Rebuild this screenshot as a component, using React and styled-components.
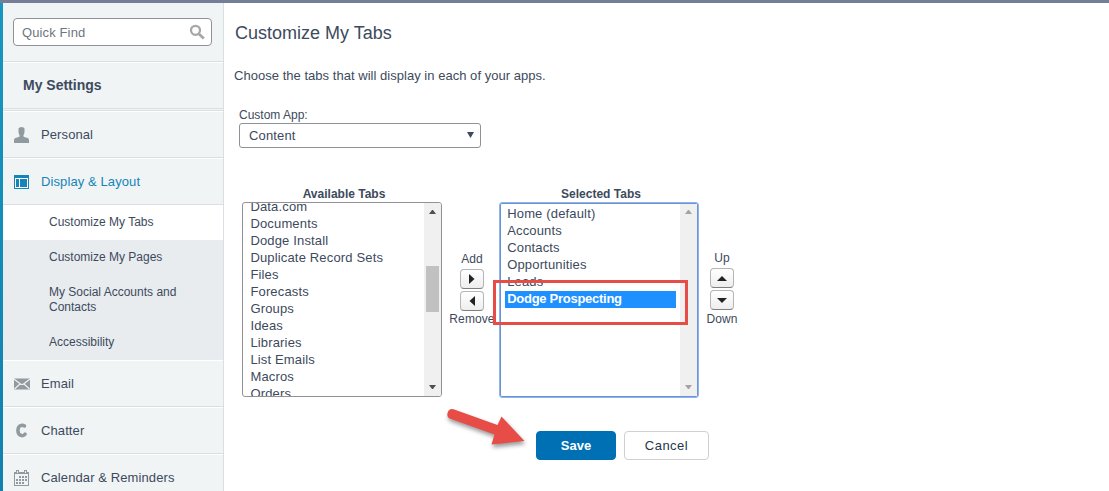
import React from 'react';
import styled, { createGlobalStyle, css } from 'styled-components';

const GlobalStyle = createGlobalStyle`
  *, *::before, *::after { box-sizing: border-box; }
  body { margin: 0; background: #fff; color: #3d4a5d; font: 13px/17px "Liberation Sans", Arial, sans-serif; overflow: hidden; }
`;

const Page = styled.div`
  display: flex;
  height: 491px;
  width: 1109px;
  border-top: 3px solid #747e96;
  position: relative;
  overflow: hidden;
`;
const Rail = styled.div`
  flex: none;
  width: 3px;
  margin-top: -3px;
  background: linear-gradient(#1797c0, #1280ae);
`;
const Sidebar = styled.aside`
  flex: none;
  width: 221px;
  background: #f0f4f5;
  border-right: 1px solid #d9dfe3;
`;
const SearchArea = styled.div`
  height: 59px;
  padding: 15px 11px 0 10px;
  border-bottom: 1px solid #d9dfe3;
`;
const SearchBox = styled.div`
  display: flex;
  align-items: center;
  justify-content: space-between;
  height: 28px;
  padding: 0 6px 0 8px;
  background: #fff;
  border: 1px solid #919297;
  border-radius: 4px;
  color: #6f757e;
  letter-spacing: 0.12px;
`;
const SideHeading = styled.h2`
  height: 47px;
  margin: 0 0 1px;
  padding-left: 20px;
  border-top: 1px solid #fff;
  border-bottom: 1px solid #d9dfe3;
  font-size: 14px;
  line-height: 45px;
`;
const HeadingRule = styled.div`
  height: 1px;
  background: #d9dfe3;
`;
const NavItem = styled.div`
  display: flex;
  align-items: center;
  height: 47px;
  padding-left: 11px;
  border-top: 1px solid #fff;
  border-bottom: 1px solid #d9dfe3;
  color: ${(p) => (p.$active ? '#1585b9' : '#3d4a5d')};
  letter-spacing: 0.1px;
  svg { width: 16px; height: 16px; margin-right: 11px; flex: none; }
`;
const SubItem = styled.div`
  padding: 10px 30px 10px 46px;
  font-size: 12px;
  line-height: 15px;
  background: ${(p) => (p.$current ? '#fff' : '#e8ecef')};
`;
const Main = styled.main`
  flex: 1;
  padding: 18px 0 0 11px;
`;
const Title = styled.h1`
  margin: 0;
  font-size: 18px;
  line-height: 24px;
  font-weight: 400;
`;
const Intro = styled.p`
  margin: 22px 0 24px -1px;
  font-size: 13px;
  line-height: 17px;
  letter-spacing: 0.03px;
`;
const FieldLabel = styled.div`
  padding-left: 4px;
  font-size: 12px;
  line-height: 15px;
`;
const Dropdown = styled.div`
  display: flex;
  align-items: center;
  justify-content: space-between;
  width: 242px;
  height: 25px;
  margin-left: 4px;
  padding: 0 6px 0 9px;
  border: 1px solid #919297;
  border-radius: 3px;
  letter-spacing: 0.15px;
`;
const Picker = styled.section`
  display: flex;
  align-items: flex-start;
  height: 211px;
  margin: 38px 0 0 7px;
`;
const ListHeading = styled.div`
  height: 16px;
  padding-left: 4px;
  font-size: 12px;
  font-weight: 700;
  line-height: 16px;
  text-align: center;
`;
const ListBox = styled.div`
  display: flex;
  justify-content: space-between;
  width: 200px;
  height: ${(p) => (p.$focused ? 196 : 195)}px;
  overflow: hidden;
  border: 1px solid #919297;
  border-radius: 3px;
  ${(p) => p.$focused && css`border-color: #8fb3ea; box-shadow: inset 0 0 0 1px #6a93d4;`}
`;
const Options = styled.div`
  flex: 1;
  margin-top: ${(p) => (p.$scrolled ? -5 : 2)}px;
  padding-left: ${(p) => (p.$scrolled ? 2 : 5)}px;
`;
const Option = styled.div`
  height: 17px;
  width: 171px;
  padding-left: ${(p) => (p.$pad ?? 5.4)}px;
  letter-spacing: 0.16px;
  white-space: nowrap;
  ${(p) => p.$selected && css`margin-top: 1px; background: #1e90ff; color: #fff; font-weight: 700; line-height: 16px; letter-spacing: -0.27px;`}
`;
const Scrollbar = styled.div`
  display: flex;
  flex-direction: column;
  justify-content: space-between;
  align-items: center;
  width: 17px;
  margin-right: ${(p) => (p.$inset ? 1 : 0)}px;
  margin-block: ${(p) => (p.$inset ? 1 : 0)}px;
  padding: ${(p) => (p.$inset ? '6px 0 7px' : '7px 0')};
  background: #f0f0f0;
  color: ${(p) => (p.$inset ? '#a3a3a3' : '#505050')};
`;
const Thumb = styled.div`
  width: 13px;
  height: 46px;
  background: #c1c1c1;
  margin-bottom: 21px;
`;
const Controls = styled.div`
  display: flex;
  flex-direction: column;
  align-items: center;
  width: ${(p) => p.$width}px;
  padding: ${(p) => p.$top}px 0 0 ${(p) => p.$indent || 0}px;
  font-size: 12px;
  line-height: 16px;
  letter-spacing: 0.1px;
`;
const ButtonPair = styled.div`
  display: flex;
  flex-direction: column;
  gap: 2px;
  margin: 2px 0 ${(p) => p.$below || 0}px;
`;
const ArrowButton = styled.button`
  display: flex;
  align-items: center;
  justify-content: center;
  width: 24px;
  height: 20px;
  padding: 0;
  border: 1px solid #b5b5b5;
  border-bottom-color: #7f7f7f;
  border-radius: 4px;
  background: linear-gradient(#fff, #eee);
  color: #222;
`;
const Actions = styled.div`
  display: flex;
  gap: 8px;
  margin: 34px 0 0 301px;
`;
const ActionButton = styled.button`
  width: ${(p) => (p.$primary ? 80 : 85)}px;
  height: 29px;
  padding: 0;
  border: 1px solid ${(p) => (p.$primary ? '#0070b4' : '#d0d0d0')};
  border-radius: 4px;
  background: ${(p) => (p.$primary ? '#0070b4' : '#fff')};
  color: ${(p) => (p.$primary ? '#fff' : '#26364a')};
  font: ${(p) => (p.$primary ? 700 : 400)} 13px/20px "Liberation Sans", Arial, sans-serif;
  letter-spacing: ${(p) => (p.$primary ? 0 : 0.5)}px;
`;
const Highlight = styled.div`
  position: absolute;
  left: 493px;
  top: 277px;
  width: 195px;
  height: 45px;
  border: 3px solid #e84c46;
`;
const Pointer = styled.svg`
  position: absolute;
  left: 436px;
  top: 397px;
  overflow: visible;
  filter: drop-shadow(1px 3px 2px rgba(0, 0, 0, 0.4));
`;

const ScrollArrow = ({ dir }) => (
  <svg width="7" height="4" viewBox="0 0 7 4">
    <polygon fill="currentColor" points={dir === 'up' ? '0,4 3,0 4,0 7,4' : '0,0 7,0 4,4 3,4'} />
  </svg>
);
const shapes = {
  right: [6, 10, '0,0 5.5,5 0,10'],
  left: [6, 10, '6,0 0.5,5 6,10'],
  up: [10, 5, '0,5 5,0 10,5'],
  down: [10, 5, '0,0 10,0 5,5'],
};
const Arrow = ({ dir }) => {
  const [w, h, p] = shapes[dir];
  return <svg width={w} height={h}><polygon fill="currentColor" points={p} /></svg>;
};

const PersonIcon = () => (
  <svg viewBox="0 0 16 16" fill="#919a9e"><path d="M4.500 1.500Q5 0 7.500 0T10.500 1.500V5Q10.300 7 9.500 8v1.500q1 1 3.500 1.300 2 .4 2 2.200V16H0v-3Q0 11.200 2 10.800 4.500 10.500 5.500 9.500V8Q4.600 7 4.500 5z" /></svg>
);
const LayoutIcon = () => (
  <svg viewBox="0 0 16 16" shapeRendering="crispEdges"><path fill="#1585b9" d="M0 1h15v14H0z" /><path fill="#fff" d="M1 4h13v10H1z" /><path fill="#1585b9" d="M2 5h3v8H2zM6 5h7v8H6z" /></svg>
);
const MailIcon = () => (
  <svg viewBox="0 0 16 16"><path fill="#919a9e" d="M0 2.500h16v11H0z" /><path d="M0 3l6.500 5q1.500 1 3 0l6.500-5M.5 13l5.500-5M15.500 13l-5.500-5" fill="none" stroke="#f0f4f5" strokeWidth="1.100" /></svg>
);
const ChatterIcon = () => (
  <svg viewBox="0 0 16 16"><path d="M10.500 3Q9 2 7.300 2.400 3.900 3.200 3.900 7.600t3.600 5q2.300.3 3.600-1.400" fill="none" stroke="#919a9e" strokeWidth="3.500" strokeLinecap="round" /></svg>
);
const CalendarIcon = () => (
  <svg viewBox="0 0 16 16" shapeRendering="crispEdges">
    <path d="M.5 2.500h14v13H.5z" fill="#f0f4f5" stroke="#919a9e" />
    <path fill="#919a9e" d="M1 3h13v1H1zM2 0h3v4H2zM10 0h3v4h-3z" />
    <path fill="#f0f4f5" d="M3 1h1v2H3zM11 1h1v2h-1z" />
    <path fill="#919a9e" d="M5 6h2v2H5zM8 6h2v2H8zM11 6h2v2h-2zM2 9h2v2H2zM5 9h2v2H5zM8 9h2v2H8zM11 9h2v2h-2zM2 12h2v2H2zM5 12h2v2H5zM8 12h2v2H8z" />
  </svg>
);
const SearchIcon = () => (
  <svg width="16" height="16" viewBox="0 0 16 16" fill="none" stroke="#a7a7a7"><circle cx="6.500" cy="6.300" r="4.500" strokeWidth="2.300" /><path d="M10 10l4.800 4.500" strokeWidth="2.800" /></svg>
);

const available = ['Data.com', 'Documents', 'Dodge Install', 'Duplicate Record Sets', 'Files', 'Forecasts', 'Groups', 'Ideas', 'Libraries', 'List Emails', 'Macros', 'Orders'];
const selected = ['Home (default)', 'Accounts', 'Contacts', 'Opportunities', 'Leads', 'Dodge Prospecting'];
const layoutPages = ['Customize My Tabs', 'Customize My Pages', 'My Social Accounts and Contacts', 'Accessibility'];

export default function App() {
  return (
    <>
      <GlobalStyle />
      <Page>
        <Rail />
        <Sidebar>
          <SearchArea><SearchBox><span>Quick Find</span><SearchIcon /></SearchBox></SearchArea>
          <SideHeading>My Settings</SideHeading>
          <HeadingRule />
          <NavItem><PersonIcon />Personal</NavItem>
          <NavItem $active><LayoutIcon />Display &amp; Layout</NavItem>
          {layoutPages.map((name, i) => <SubItem key={name} $current={i === 0}>{name}</SubItem>)}
          <NavItem><MailIcon />Email</NavItem>
          <NavItem><ChatterIcon />Chatter</NavItem>
          <NavItem><CalendarIcon />Calendar &amp; Reminders</NavItem>
        </Sidebar>
        <Main>
          <Title>Customize My Tabs</Title>
          <Intro>Choose the tabs that will display in each of your apps.</Intro>
          <FieldLabel>Custom App:</FieldLabel>
          <Dropdown>
            <span>Content</span>
            <svg width="7" height="8"><polygon fill="#3d4a5d" points="0,0 7,0 3.5,6" /></svg>
          </Dropdown>
          <Picker>
            <div>
              <ListHeading>Available Tabs</ListHeading>
              <ListBox>
                <Options $scrolled>
                  {available.map((name) => <Option key={name}>{name}</Option>)}
                </Options>
                <Scrollbar><ScrollArrow dir="up" /><Thumb /><ScrollArrow dir="down" /></Scrollbar>
              </ListBox>
            </div>
            <Controls $width={57} $top={65} $indent={3}>
              <span>Add</span>
              <ButtonPair>
                <ArrowButton><Arrow dir="right" /></ArrowButton>
                <ArrowButton><Arrow dir="left" /></ArrowButton>
              </ButtonPair>
              <span>Remove</span>
            </Controls>
            <div>
              <ListHeading>Selected Tabs</ListHeading>
              <ListBox $focused>
                <Options>
                  {selected.map((name) => <Option key={name} $pad={2.2} $selected={name === 'Dodge Prospecting'}>{name}</Option>)}
                </Options>
                <Scrollbar $inset><ScrollArrow dir="up" /><ScrollArrow dir="down" /></Scrollbar>
              </ListBox>
            </div>
            <Controls $width={46} $top={64}>
              <span>Up</span>
              <ButtonPair $below={1}>
                <ArrowButton><Arrow dir="up" /></ArrowButton>
                <ArrowButton><Arrow dir="down" /></ArrowButton>
              </ButtonPair>
              <span>Down</span>
            </Controls>
          </Picker>
          <Actions>
            <ActionButton $primary>Save</ActionButton>
            <ActionButton>Cancel</ActionButton>
          </Actions>
        </Main>
        <Highlight />
        <Pointer width="90" height="50" viewBox="0 0 90 50">
          <path fill="#e84c46" d="M17.500 9.300L61.500 25 65.500 16.500 88.500 41 55.500 44.500 58.500 34.500 14.500 18.800A5 5 0 0 1 17.500 9.300z" />
        </Pointer>
      </Page>
    </>
  );
}
